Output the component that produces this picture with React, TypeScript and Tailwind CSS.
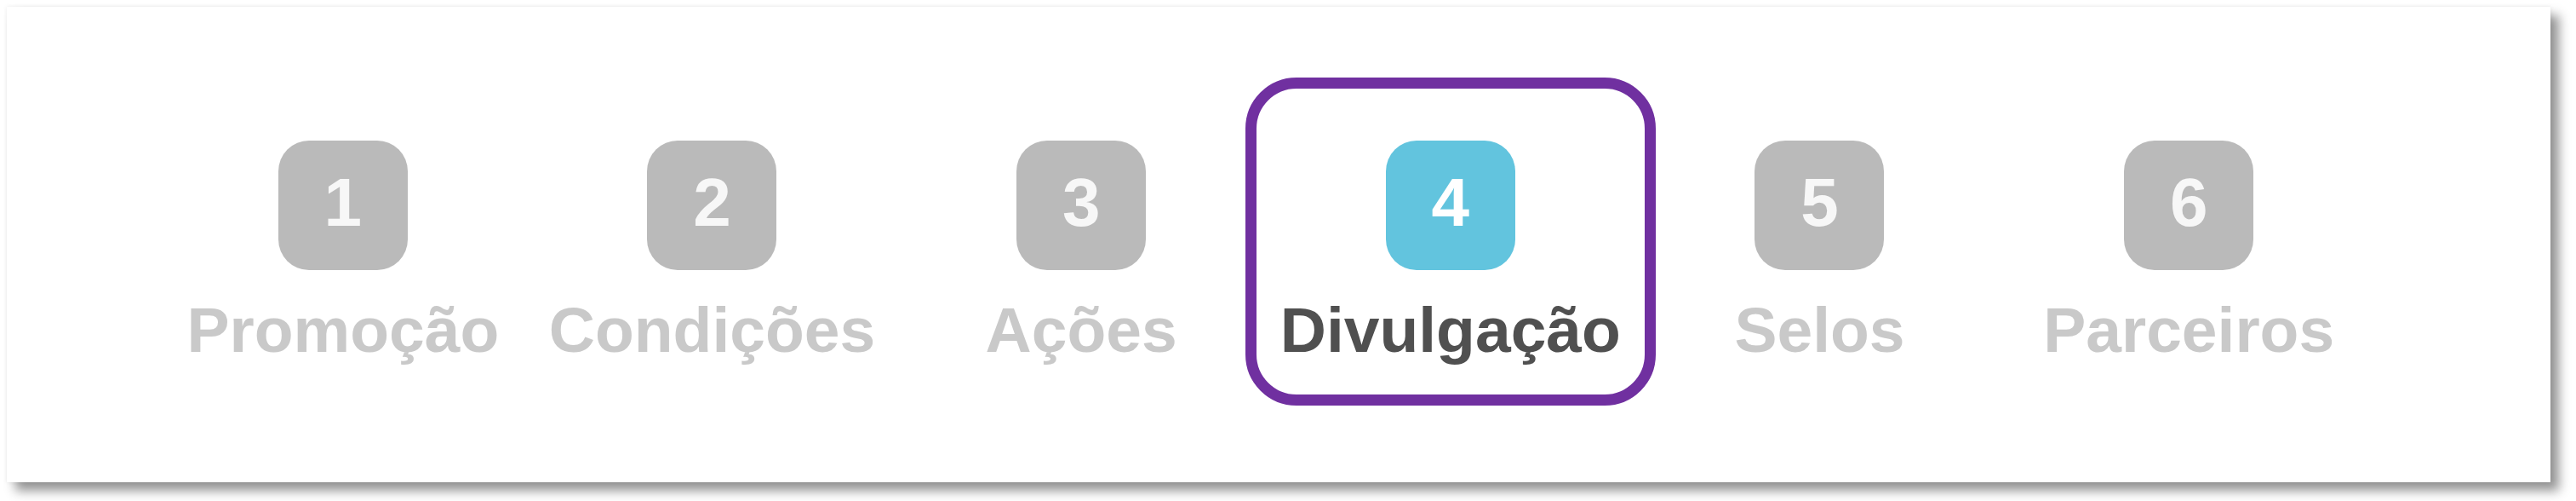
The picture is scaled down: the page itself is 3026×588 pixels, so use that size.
const STEPS = [
  { n: 1, label: 'Promoção' },
  { n: 2, label: 'Condições' },
  { n: 3, label: 'Ações' },
  { n: 4, label: 'Divulgação' },
  { n: 5, label: 'Selos' },
  { n: 6, label: 'Parceiros' },
]

const ACTIVE = 4

export default function App() {
  return (
    <div className="w-[3026px] h-[588px] bg-white pl-[8px] pt-[8px]" style={{ fontFamily: '"Liberation Sans", Arial, sans-serif' }}>
      <div className="w-[2988px] h-[558px] bg-white shadow-[10px_10px_12px_rgba(0,0,0,0.42),0_0_5px_rgba(0,0,0,0.08)] pt-[157px] pl-[178px]">
        <div className="grid grid-cols-6 w-[2602px]">
          {STEPS.map(step => {
            const active = step.n === ACTIVE
            return (
              <div key={step.n} className="relative flex flex-col items-center">
                {/* destaque da etapa atual */}
                {active && (
                  <div className="absolute top-[-74px] left-[-24px] right-[-24px] h-[385px] border-[13px] border-[#7030a0] rounded-[60px]" />
                )}
                <div className={`w-[152px] h-[152px] rounded-[36px] flex items-center justify-center pb-[7px] ${
                  active ? 'bg-[#62c4de]' : 'bg-[#bababa]'
                }`}>
                  <span className={`text-[80px] leading-none font-bold ${active ? 'text-white' : 'text-[#f7f7f7]'}`}>
                    {step.n}
                  </span>
                </div>
                <span className={`mt-[33px] text-[75px] leading-none font-bold whitespace-nowrap ${
                  active ? 'text-[#505050]' : 'text-[#c9c9c9]'
                }`}>
                  {step.label}
                </span>
              </div>
            )
          })}
        </div>
      </div>
    </div>
  )
}
